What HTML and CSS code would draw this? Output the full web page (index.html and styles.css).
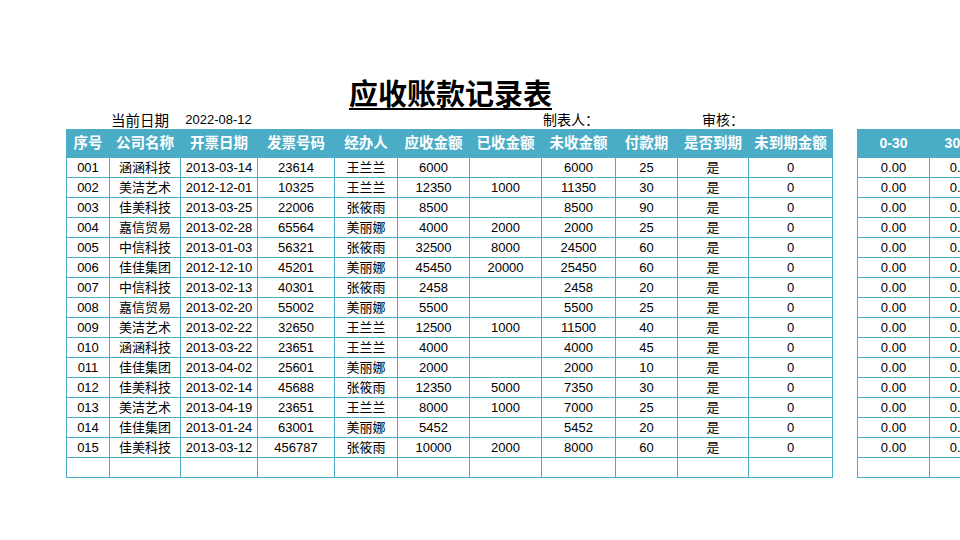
FILE: index.html
```html
<!DOCTYPE html>
<html lang="zh-CN">
<head>
<meta charset="utf-8">
<title>应收账款记录表</title>
<link rel="stylesheet" href="styles.css">
</head>
<body>
<div class="sheet">
  <div class="main">
    <h1 class="title">应收账款记录表</h1>
    <div class="info">
      <span class="i-label">当前日期</span>
      <span class="i-date">2022-08-12</span>
      <span class="i-gap"></span>
      <span class="i-maker">制表人：</span>
      <span class="i-audit">审核：</span>
    </div>
    <table class="grid main-grid">
      <colgroup>
        <col class="c43"><col class="c71"><col class="c77"><col class="c77"><col class="c63"><col class="c72"><col class="c72"><col class="c74"><col class="c62"><col class="c71"><col class="c84">
      </colgroup>
      <thead>
        <tr><th>序号</th><th>公司名称</th><th>开票日期</th><th>发票号码</th><th>经办人</th><th>应收金额</th><th>已收金额</th><th>未收金额</th><th>付款期</th><th>是否到期</th><th>未到期金额</th></tr>
      </thead>
      <tbody>
        <tr><td>001</td><td>涵涵科技</td><td>2013-03-14</td><td>23614</td><td>王兰兰</td><td>6000</td><td></td><td>6000</td><td>25</td><td>是</td><td>0</td></tr>
        <tr><td>002</td><td>美洁艺术</td><td>2012-12-01</td><td>10325</td><td>王兰兰</td><td>12350</td><td>1000</td><td>11350</td><td>30</td><td>是</td><td>0</td></tr>
        <tr><td>003</td><td>佳美科技</td><td>2013-03-25</td><td>22006</td><td>张筱雨</td><td>8500</td><td></td><td>8500</td><td>90</td><td>是</td><td>0</td></tr>
        <tr><td>004</td><td>嘉信贸易</td><td>2013-02-28</td><td>65564</td><td>美丽娜</td><td>4000</td><td>2000</td><td>2000</td><td>25</td><td>是</td><td>0</td></tr>
        <tr><td>005</td><td>中信科技</td><td>2013-01-03</td><td>56321</td><td>张筱雨</td><td>32500</td><td>8000</td><td>24500</td><td>60</td><td>是</td><td>0</td></tr>
        <tr><td>006</td><td>佳佳集团</td><td>2012-12-10</td><td>45201</td><td>美丽娜</td><td>45450</td><td>20000</td><td>25450</td><td>60</td><td>是</td><td>0</td></tr>
        <tr><td>007</td><td>中信科技</td><td>2013-02-13</td><td>40301</td><td>张筱雨</td><td>2458</td><td></td><td>2458</td><td>20</td><td>是</td><td>0</td></tr>
        <tr><td>008</td><td>嘉信贸易</td><td>2013-02-20</td><td>55002</td><td>美丽娜</td><td>5500</td><td></td><td>5500</td><td>25</td><td>是</td><td>0</td></tr>
        <tr><td>009</td><td>美洁艺术</td><td>2013-02-22</td><td>32650</td><td>王兰兰</td><td>12500</td><td>1000</td><td>11500</td><td>40</td><td>是</td><td>0</td></tr>
        <tr><td>010</td><td>涵涵科技</td><td>2013-03-22</td><td>23651</td><td>王兰兰</td><td>4000</td><td></td><td>4000</td><td>45</td><td>是</td><td>0</td></tr>
        <tr><td>011</td><td>佳佳集团</td><td>2013-04-02</td><td>25601</td><td>美丽娜</td><td>2000</td><td></td><td>2000</td><td>10</td><td>是</td><td>0</td></tr>
        <tr><td>012</td><td>佳美科技</td><td>2013-02-14</td><td>45688</td><td>张筱雨</td><td>12350</td><td>5000</td><td>7350</td><td>30</td><td>是</td><td>0</td></tr>
        <tr><td>013</td><td>美洁艺术</td><td>2013-04-19</td><td>23651</td><td>王兰兰</td><td>8000</td><td>1000</td><td>7000</td><td>25</td><td>是</td><td>0</td></tr>
        <tr><td>014</td><td>佳佳集团</td><td>2013-01-24</td><td>63001</td><td>美丽娜</td><td>5452</td><td></td><td>5452</td><td>20</td><td>是</td><td>0</td></tr>
        <tr><td>015</td><td>佳美科技</td><td>2013-03-12</td><td>456787</td><td>张筱雨</td><td>10000</td><td>2000</td><td>8000</td><td>60</td><td>是</td><td>0</td></tr>
        <tr><td></td><td></td><td></td><td></td><td></td><td></td><td></td><td></td><td></td><td></td><td></td></tr>
      </tbody>
    </table>
  </div>
  <div class="aging">
    <table class="grid aging-grid">
      <colgroup>
        <col class="c72"><col class="c66">
      </colgroup>
      <thead>
        <tr><th>0-30</th><th>30-60</th></tr>
      </thead>
      <tbody>
        <tr><td>0.00</td><td>0.00</td></tr>
        <tr><td>0.00</td><td>0.00</td></tr>
        <tr><td>0.00</td><td>0.00</td></tr>
        <tr><td>0.00</td><td>0.00</td></tr>
        <tr><td>0.00</td><td>0.00</td></tr>
        <tr><td>0.00</td><td>0.00</td></tr>
        <tr><td>0.00</td><td>0.00</td></tr>
        <tr><td>0.00</td><td>0.00</td></tr>
        <tr><td>0.00</td><td>0.00</td></tr>
        <tr><td>0.00</td><td>0.00</td></tr>
        <tr><td>0.00</td><td>0.00</td></tr>
        <tr><td>0.00</td><td>0.00</td></tr>
        <tr><td>0.00</td><td>0.00</td></tr>
        <tr><td>0.00</td><td>0.00</td></tr>
        <tr><td>0.00</td><td>0.00</td></tr>
        <tr><td></td><td></td></tr>
      </tbody>
    </table>
  </div>
</div>
</body>
</html>
```
FILE: styles.css
```css
html, body {
  margin: 0;
  padding: 0;
  background: #ffffff;
  overflow: hidden;
  width: 960px;
  height: 540px;
}

body {
  font-family: "Liberation Sans", "Noto Sans CJK SC", sans-serif;
  color: #000;
}

.sheet {
  display: flex;
  align-items: flex-end;
  gap: 24px;
  padding: 74px 0 0 66px;
  width: 1200px;
}

.main {
  display: flex;
  flex-direction: column;
  width: 767px;
  flex: none;
}

.title {
  margin: 0;
  font-family: "Noto Sans CJK SC", sans-serif;
  font-size: 29px;
  font-weight: 700;
  line-height: 36px;
  height: 36px;
  text-align: center;
  text-decoration: underline;
  text-decoration-thickness: 2px;
  text-underline-offset: 3px;
  padding-left: 2px;
}

.info {
  display: flex;
  height: 19px;
  line-height: 19px;
  font-size: 14px;
  font-family: "Noto Sans CJK SC", sans-serif;
}

.i-label {
  box-sizing: border-box;
  width: 114px;
  padding-left: 45px;
  font-size: 14.5px;
}
.i-date {
  width: 77px;
  text-align: center;
  font-family: "Liberation Sans", sans-serif;
  font-size: 13px;
}
.i-gap { width: 286px; }
.i-maker { width: 159px; }
.i-audit { flex: none; }

.grid {
  border-collapse: collapse;
  table-layout: fixed;
  font-size: 13px;
}

.main-grid { width: 767px; }
.aging-grid { width: 139px; }

.grid th,
.grid td {
  border: 1px solid #4bacc6;
  padding: 0;
  text-align: center;
  white-space: nowrap;
  overflow: hidden;
}

.grid th {
  background: #4bacc6;
  color: #ffffff;
  font-weight: 700;
  font-size: 14.5px;
  height: 27px;
  line-height: 27px;
}

.aging-grid th {
  font-size: 14px;
}

.grid td {
  height: 19px;
  line-height: 19px;
}

.c43 { width: 43px; }
.c62 { width: 62px; }
.c63 { width: 63px; }
.c66 { width: 66px; }
.c71 { width: 71px; }
.c72 { width: 72px; }
.c74 { width: 74px; }
.c77 { width: 77px; }
.c84 { width: 84px; }
```
